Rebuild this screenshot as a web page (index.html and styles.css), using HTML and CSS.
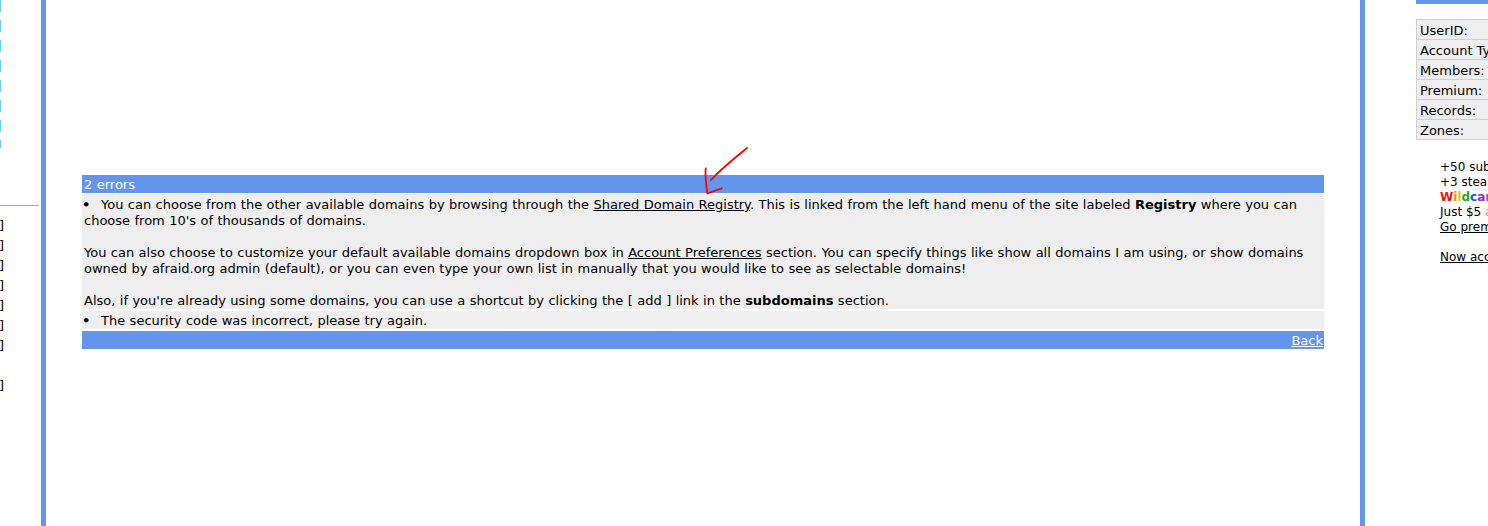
FILE: index.html
```html
<!DOCTYPE html>
<html>
<head>
<meta charset="utf-8">
<title>Errors</title>
<link rel="stylesheet" href="styles.css">
</head>
<body>
<div class="page">
  <div class="left">
    <div class="dash"></div>
    <div class="rule"></div>
    <div class="brackets">
      <div class="br">]</div>
      <div class="br">]</div>
      <div class="br">]</div>
      <div class="br">]</div>
      <div class="br">]</div>
      <div class="br">]</div>
      <div class="br">]</div>
      <div class="br">&nbsp;</div>
      <div class="br">]</div>
    </div>
  </div>

  <div class="main">
    <div class="errbox">
      <div class="err-head">2 errors</div>
      <div class="err-row first">
        <span class="bullet">•</span>You can choose from the other available domains by browsing through the <a href="#" class="lnk">Shared Domain Registry</a>. This is linked from the left hand menu of the site labeled <b>Registry</b> where you can choose from 10's of thousands of domains.<br><br>You can also choose to customize your default available domains dropdown box in <a href="#" class="lnk">Account Preferences</a> section. You can specify things like show all domains I am using, or show domains owned by afraid.org admin (default), or you can even type your own list in manually that you would like to see as selectable domains!<br><br>Also, if you're already using some domains, you can use a shortcut by clicking the [ add ] link in the <b>subdomains</b> section.
      </div>
      <div class="err-row second">
        <span class="bullet">•</span>The security code was incorrect, please try again.
      </div>
      <div class="err-foot"><a href="#" class="back">Back</a></div>
    </div>
    <svg class="arrow" width="56" height="60" viewBox="0 0 56 60" xmlns="http://www.w3.org/2000/svg">
      <path d="M47 8 C40 14 24 26 11 40" fill="none" stroke="#f00" stroke-width="1.8" stroke-linecap="round"/>
      <path d="M5.7 28.5 C4.8 36 6.5 46 7.3 53.5 L21.7 48.3" fill="none" stroke="#f00" stroke-width="1.8" stroke-linecap="round" stroke-linejoin="round"/>
    </svg>
  </div>

  <div class="right">
    <div class="topbar"></div>
    <table class="info">
      <tr><td class="lbl">UserID:</td><td class="val"></td></tr>
      <tr><td class="lbl">Account Type:</td><td class="val"></td></tr>
      <tr><td class="lbl">Members:</td><td class="val"></td></tr>
      <tr><td class="lbl">Premium:</td><td class="val"></td></tr>
      <tr><td class="lbl">Records:</td><td class="val"></td></tr>
      <tr><td class="lbl">Zones:</td><td class="val"></td></tr>
    </table>
    <div class="promo">
      <div>+50 subdomains</div>
      <div>+3 stealth flags</div>
      <div class="wild"><span class="c1">W</span><span class="c2">i</span><span class="c3">l</span><span class="c4">d</span><span class="c5">c</span><span class="c6">a</span><span class="c7">r</span><span class="c1">d</span> DNS</div>
      <div>Just $5 <span class="hint">a month</span></div>
      <div><a href="#" class="plink">Go premium now!</a></div>
      <div>&nbsp;</div>
      <div><a href="#" class="plink">Now accepting payments</a></div>
    </div>
  </div>
</div>
</body>
</html>
```

FILE: styles.css
```css
html, body {
  margin: 0;
  padding: 0;
  background: #fff;
  overflow: hidden;
}
body {
  width: 1488px;
  height: 526px;
  font-family: "DejaVu Sans", Verdana, sans-serif;
  font-size: 13px;
  color: #000;
}
.page {
  display: flex;
  height: 526px;
  width: 1488px;
  overflow: hidden;
}
.left {
  width: 41px;
  flex: none;
}
.dash {
  width: 1px;
  height: 148px;
  background: repeating-linear-gradient(to bottom, #66ccff 0 12px, transparent 12px 20px);
}
.rule {
  margin-top: 57px;
  width: 39px;
  height: 1px;
  background: #a8a8a8;
}
.brackets {
  margin-top: 10px;
}
.br {
  line-height: 20px;
  height: 20px;
  margin-left: -1px;
}
.main {
  position: relative;
  flex: none;
  width: 1314px;
  border-left: 5px solid #6495ed;
  border-right: 5px solid #6495ed;
  padding-top: 175px;
}
.errbox {
  margin: 0 36px;
  line-height: 16px;
  word-spacing: 0.3px;
}
.err-head {
  background: #6495ed;
  color: #fff;
  padding: 2px 2px 0;
}
.err-row {
  background: #eeeeee;
}
.err-row.first {
  margin-top: 1px;
  padding: 3px 2px 0;
}
.err-row.second {
  margin-top: 2px;
  padding: 2px 2px 0;
}
.bullet {
  display: inline-block;
  width: 19px;
  margin-left: -2px;
  font-weight: bold;
  word-spacing: 0;
}
.lnk {
  color: #000;
  text-decoration: underline;
}
.err-foot {
  margin-top: 2px;
  background: #6495ed;
  padding: 2px 1px 0;
  text-align: right;
}
.back {
  color: #fff;
  text-decoration: underline;
}
.arrow {
  position: absolute;
  left: 654px;
  top: 140px;
}
.right {
  flex: none;
  width: 400px;
  padding-left: 51px;
}
.topbar {
  height: 4px;
  background: #6495ed;
}
.info {
  margin-top: 15px;
  border-collapse: collapse;
  border: 1px solid #c8c8c8;
  width: 300px;
}
.info td {
  background: #eeeeee;
  border: 1px solid #d0d0d0;
  height: 17px;
  padding: 2px 3px 0;
  line-height: 16px;
  white-space: nowrap;
}
.info td.lbl {
  width: 100px;
}
.promo {
  margin-top: 20px;
  padding-left: 24px;
  font-size: 12px;
  line-height: 15px;
  white-space: nowrap;
}
.wild {
  font-weight: bold;
}
.c1 { color: #ee1111; }
.c2 { color: #ff8800; }
.c3 { color: #cccc00; }
.c4 { color: #22aa22; }
.c5 { color: #2255dd; }
.c6 { color: #8833cc; }
.c7 { color: #cc44aa; }
.hint { color: #88aadd; }
.plink {
  color: #000;
  text-decoration: underline;
}
```
